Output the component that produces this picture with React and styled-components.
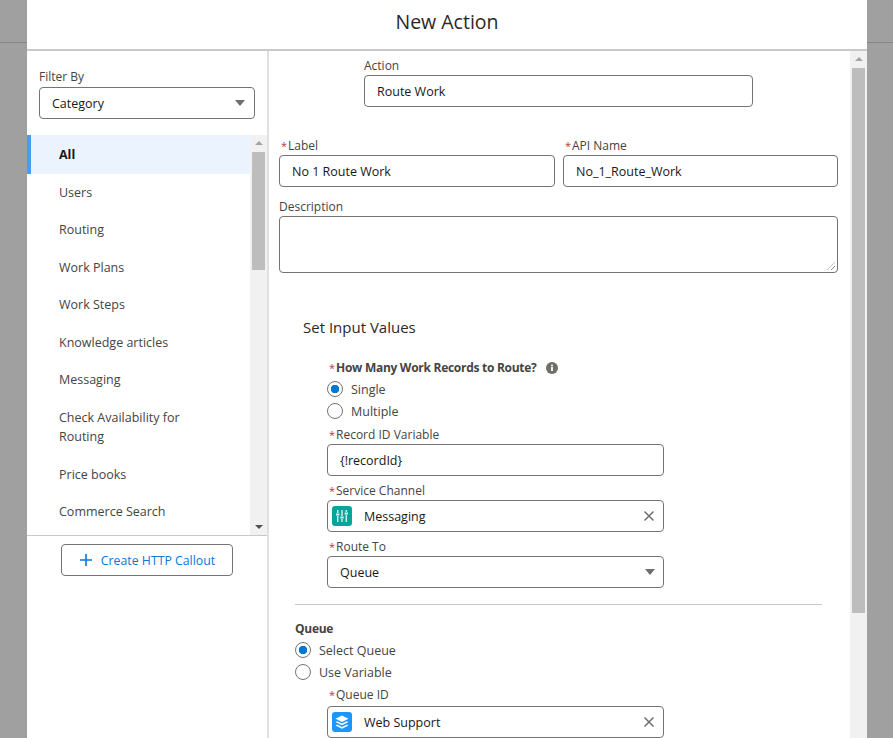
import React from 'react';
import styled, { createGlobalStyle } from 'styled-components';

const GlobalStyle = createGlobalStyle`
  html, body {
    margin: 0;
    padding: 0;
    overflow: hidden;
  }
  * {
    box-sizing: border-box;
  }
  body {
    font-family: 'Open Sans', 'Noto Sans', sans-serif;
    font-size: 12.5px;
    color: #3e3e3c;
  }
`;

const Backdrop = styled.div`
  position: relative;
  height: 738px;
  overflow: hidden;
  background: #a0a0a0;
  padding-left: 27px;
  &::before {
    content: '';
    position: absolute;
    top: 42px;
    left: 0;
    right: 0;
    height: 1px;
    background: #858585;
  }
`;

const Modal = styled.div`
  position: relative;
  width: 840px;
  height: 738px;
  background: #fff;
  display: flex;
  flex-direction: column;
`;

const ModalHeader = styled.header`
  flex: none;
  height: 51px;
  padding-bottom: 7px;
  border-bottom: 2px solid #c9c9c9;
  display: flex;
  align-items: center;
  justify-content: center;
  font-size: 19.5px;
  color: #2b2826;
`;

const ModalBody = styled.div`
  flex: 1;
  min-height: 0;
  display: flex;
`;

const Sidebar = styled.aside`
  flex: none;
  width: 242px;
  border-right: 2px solid #e0e0e0;
  display: flex;
  flex-direction: column;
`;

const FilterBlock = styled.div`
  flex: none;
  height: 84px;
  padding: 16px 12px 0;
`;

const FieldLabel = styled.div`
  font-size: 12px;
  line-height: 18px;
  padding-top: 1px;
  color: #444;
  margin-bottom: ${(props) => props.$gap ?? 0}px;
  font-weight: ${(props) => (props.$bold ? 700 : 400)};
  letter-spacing: ${(props) => (props.$bold ? '-0.28px' : 'normal')};
`;

const Star = styled.span`
  display: inline-block;
  width: 7px;
  margin-left: 2px;
  color: #c23934;
  font-size: 11px;
  font-weight: 400;
`;

const Box = styled.div`
  position: relative;
  display: flex;
  align-items: center;
  height: 32px;
  padding: 0 12px;
  background: #fff;
  border: 1px solid #747474;
  border-radius: 4px;
  color: #181818;
  font-size: 12.5px;
`;

const TextArea = styled(Box)`
  height: 57px;
  &::after {
    content: '';
    position: absolute;
    right: 2px;
    bottom: 2px;
    width: 8px;
    height: 8px;
    background: repeating-linear-gradient(135deg, transparent 0 2px, #8a8a8a 2px 3px);
    clip-path: polygon(100% 0, 100% 100%, 0 100%);
  }
`;

const Caret = styled.span`
  margin-left: auto;
  margin-right: ${(props) => props.$right ?? -3}px;
  width: 0;
  height: 0;
  border-left: 5px solid transparent;
  border-right: 5px solid transparent;
  border-top: 6px solid #706e6b;
`;

const ListArea = styled.div`
  flex: none;
  height: 401px;
  display: flex;
  border-bottom: 1px solid #c9c9c9;
`;

const CategoryList = styled.ul`
  flex: 1;
  margin: 0;
  padding: 0;
  list-style: none;
`;

const Category = styled.li`
  padding: ${(props) => (props.$active ? 10 : 9)}px 40px 9px ${(props) => (props.$active ? 28 : 32)}px;
  line-height: 19.5px;
  font-size: 12.5px;
  color: ${(props) => (props.$active ? '#181818' : '#444')};
  font-weight: ${(props) => (props.$active ? 700 : 400)};
  background: ${(props) => (props.$active ? '#eaf3fe' : 'transparent')};
  border-left: ${(props) => (props.$active ? '4px solid #4a9bf8' : 'none')};
`;

const Track = styled.div`
  flex: none;
  position: relative;
  width: 17px;
  background: #f1f1f1;
`;

const Thumb = styled.div`
  position: absolute;
  left: 2px;
  right: 2px;
  top: ${(props) => props.$top}px;
  height: ${(props) => props.$height}px;
  background: #bdbdbd;
`;

const Arrow = styled.span`
  position: absolute;
  left: 4.5px;
  width: 0;
  height: 0;
  border-left: 4px solid transparent;
  border-right: 4px solid transparent;
  ${(props) =>
    props.$down
      ? 'bottom: 6px; border-top: 4px solid #505050;'
      : 'top: 6px; border-bottom: 4px solid #a3a3a3;'}
`;

const CalloutWrap = styled.div`
  display: flex;
  justify-content: center;
  padding-top: 8px;
`;

const CalloutButton = styled.button`
  width: 172px;
  height: 32px;
  display: flex;
  align-items: center;
  justify-content: center;
  gap: 8px;
  background: #fff;
  border: 1px solid #747474;
  border-radius: 4px;
  color: #0b76d3;
  font-family: inherit;
  font-size: 12.3px;
  padding: 0;
`;

const Main = styled.main`
  flex: 1;
  min-width: 0;
  display: flex;
  overflow: hidden;
`;

const Form = styled.div`
  flex: 1;
  min-width: 0;
  padding: 5px 12px 0 10px;
`;

const ActionField = styled.div`
  width: 389px;
  margin-left: 85px;
`;

const TwoCols = styled.div`
  display: grid;
  grid-template-columns: 276px 275px;
  column-gap: 8px;
  margin-top: 29px;
`;

const DescField = styled.div`
  margin-top: 10px;
`;

const SectionTitle = styled.h2`
  margin: 42px 0 0 24px;
  font-size: 15px;
  line-height: 24px;
  font-weight: 400;
  color: #2b2826;
`;

const InputGroup = styled.div`
  width: 337px;
  margin: ${(props) => props.$top ?? 0}px 0 0 48px;
`;

const Field = styled.div`
  margin-top: ${(props) => props.$top ?? 5}px;
`;

const HelpRow = styled.div`
  display: flex;
  align-items: center;
  gap: 9px;
  margin-bottom: 1px;
`;

const RadioRow = styled.div`
  display: flex;
  align-items: center;
  gap: 8px;
  height: 22px;
  font-size: 12.5px;
  color: #444;
`;

const RadioDot = styled.span`
  flex: none;
  width: 16px;
  height: 16px;
  border-radius: 50%;
  border: 1px solid #747474;
  background: ${(props) =>
    props.$checked ? 'radial-gradient(circle, #0176d3 0 4px, #fff 4.5px)' : '#fff'};
`;

const PillIcon = styled.span`
  flex: none;
  width: 20px;
  height: 20px;
  border-radius: 3px;
  background: ${(props) => props.$color};
  display: flex;
  align-items: center;
  justify-content: center;
  margin: 0 12px 0 -8px;
`;

const ClearIcon = styled.svg`
  margin-left: auto;
  margin-right: -4px;
`;

const Divider = styled.hr`
  width: 527px;
  margin: 16px 0 0 16px;
  border: none;
  border-top: 1px solid #c9c9c9;
`;

const QueueBlock = styled.div`
  margin: 14px 0 0 16px;
`;

const categories = [
  'All',
  'Users',
  'Routing',
  'Work Plans',
  'Work Steps',
  'Knowledge articles',
  'Messaging',
  'Check Availability for Routing',
  'Price books',
  'Commerce Search',
];

const Label = ({ gap, children }) => (
  <FieldLabel $gap={gap}>
    <Star>*</Star>
    {children}
  </FieldLabel>
);

const Radio = ({ checked, children }) => (
  <RadioRow>
    <RadioDot $checked={checked} />
    {children}
  </RadioRow>
);

const Clear = () => (
  <ClearIcon width="12" height="12" viewBox="0 0 12 12">
    <path d="M1.5 1.5l9 9M10.5 1.5l-9 9" stroke="#706e6b" strokeWidth="1.5" fill="none" />
  </ClearIcon>
);

const SlidersGlyph = () => (
  <svg width="14" height="14" viewBox="0 0 14 14" fill="#d5f2ef">
    <rect x="2" y="1" width="1.4" height="3" />
    <rect x="1" y="4.5" width="3.4" height="2" />
    <rect x="2" y="7" width="1.4" height="6" />
    <rect x="6.3" y="1" width="1.4" height="6" />
    <rect x="5.3" y="7.5" width="3.4" height="2" />
    <rect x="6.3" y="10" width="1.4" height="3" />
    <rect x="10.6" y="1" width="1.4" height="2" />
    <rect x="9.6" y="3.5" width="3.4" height="2" />
    <rect x="10.6" y="6" width="1.4" height="7" />
  </svg>
);

const LayersGlyph = () => (
  <svg width="16" height="16" viewBox="0 0 16 16" fill="#fff">
    <path d="M8 1.5l6.5 3.2L8 8 1.5 4.7z" />
    <path d="M3.2 7.2L8 9.6l4.8-2.4 1.7.9L8 11.3 1.5 8.1z" />
    <path d="M3.2 10.6L8 13l4.8-2.4 1.7.9L8 14.7l-6.5-3.2z" />
  </svg>
);

const InfoGlyph = () => (
  <svg width="12" height="12" viewBox="0 0 12 12">
    <circle cx="6" cy="6" r="6" fill="#706e6b" />
    <rect x="5.1" y="5" width="1.8" height="4" fill="#fff" />
    <circle cx="6" cy="3.4" r="1" fill="#fff" />
  </svg>
);

const PlusGlyph = () => (
  <svg width="14" height="14" viewBox="0 0 14 14">
    <path d="M7 1v12M1 7h12" stroke="#0b76d3" strokeWidth="1.6" />
  </svg>
);

export default function App() {
  return (
    <>
      <GlobalStyle />
      <Backdrop>
        <Modal>
          <ModalHeader>New Action</ModalHeader>
          <ModalBody>
            <Sidebar>
              <FilterBlock>
                <FieldLabel $gap={1}>Filter By</FieldLabel>
                <Box>
                  Category
                  <Caret />
                </Box>
              </FilterBlock>
              <ListArea>
                <CategoryList>
                  {categories.map((name) => (
                    <Category key={name} $active={name === 'All'}>
                      {name}
                    </Category>
                  ))}
                </CategoryList>
                <Track>
                  <Arrow />
                  <Thumb $top={17} $height={118} />
                  <Arrow $down />
                </Track>
              </ListArea>
              <CalloutWrap>
                <CalloutButton>
                  <PlusGlyph />
                  Create HTTP Callout
                </CalloutButton>
              </CalloutWrap>
            </Sidebar>
            <Main>
              <Form>
                <ActionField>
                  <FieldLabel>Action</FieldLabel>
                  <Box>Route Work</Box>
                </ActionField>
                <TwoCols>
                  <div>
                    <Label>Label</Label>
                    <Box>No 1 Route Work</Box>
                  </div>
                  <div>
                    <Label>API Name</Label>
                    <Box>No_1_Route_Work</Box>
                  </div>
                </TwoCols>
                <DescField>
                  <FieldLabel>Description</FieldLabel>
                  <TextArea />
                </DescField>
                <SectionTitle>Set Input Values</SectionTitle>
                <InputGroup $top={19}>
                  <HelpRow>
                    <FieldLabel $bold>
                      <Star>*</Star>
                      How Many Work Records to Route?
                    </FieldLabel>
                    <InfoGlyph />
                  </HelpRow>
                  <Radio checked>Single</Radio>
                  <Radio>Multiple</Radio>
                  <Field $top={3}>
                    <Label>Record ID Variable</Label>
                    <Box>{'{!recordId}'}</Box>
                  </Field>
                  <Field>
                    <Label>Service Channel</Label>
                    <Box>
                      <PillIcon $color="#06a59a">
                        <SlidersGlyph />
                      </PillIcon>
                      Messaging
                      <Clear />
                    </Box>
                  </Field>
                  <Field>
                    <Label>Route To</Label>
                    <Box>
                      Queue
                      <Caret $right={-4} />
                    </Box>
                  </Field>
                </InputGroup>
                <Divider />
                <QueueBlock>
                  <FieldLabel $bold $gap={1}>
                    Queue
                  </FieldLabel>
                  <Radio checked>Select Queue</Radio>
                  <Radio>Use Variable</Radio>
                </QueueBlock>
                <InputGroup $top={2}>
                  <Label gap={2}>Queue ID</Label>
                  <Box>
                    <PillIcon $color="#1b96ff">
                      <LayersGlyph />
                    </PillIcon>
                    Web Support
                    <Clear />
                  </Box>
                </InputGroup>
              </Form>
              <Track>
                <Arrow />
                <Thumb $top={17} $height={545} />
              </Track>
            </Main>
          </ModalBody>
        </Modal>
      </Backdrop>
    </>
  );
}
